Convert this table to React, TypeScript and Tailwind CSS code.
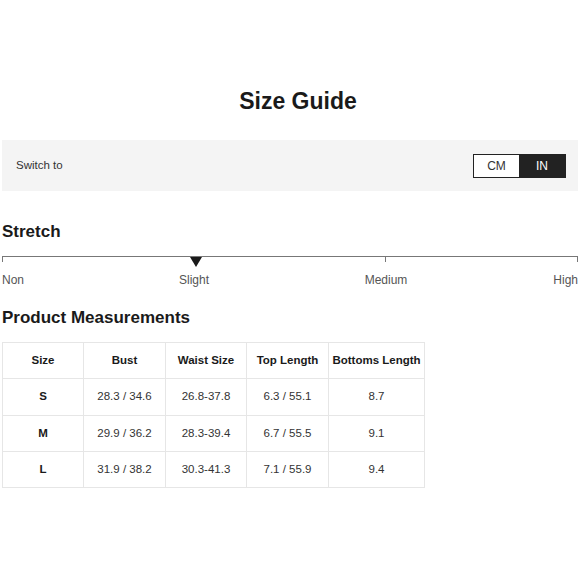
const ROWS = [
  { size: 'S', bust: '28.3 / 34.6', waist: '26.8-37.8', top: '6.3 / 55.1', bottoms: '8.7' },
  { size: 'M', bust: '29.9 / 36.2', waist: '28.3-39.4', top: '6.7 / 55.5', bottoms: '9.1' },
  { size: 'L', bust: '31.9 / 38.2', waist: '30.3-41.3', top: '7.1 / 55.9', bottoms: '9.4' },
]

const HEADERS = [
  { label: 'Size', w: 'w-[81px]' },
  { label: 'Bust', w: 'w-[82px]' },
  { label: 'Waist Size', w: 'w-[81px]' },
  { label: 'Top Length', w: 'w-[82px]' },
  { label: 'Bottoms Length', w: 'w-[96px]' },
]

export default function App() {
  return (
    <div className="w-[580px] h-[580px] bg-white font-['Liberation_Sans',Arial,sans-serif] text-[#222]">
      <div className="h-[140px] pl-[16px] pt-[88px] text-center text-[23px] leading-[26px] font-bold text-[#1a1a1a]">
        Size Guide
      </div>

      <div className="mx-[2px] flex h-[51px] items-center justify-between bg-[#f4f4f4] pl-[14px] pr-[12px]">
        <span className="text-[11.5px] text-[#333]">Switch to</span>
        <div className="flex h-[24px] border border-[#222] text-[12px]">
          <button className="w-[45px] bg-white text-[#333]">CM</button>
          <button className="w-[46px] bg-[#222] text-white">IN</button>
        </div>
      </div>

      <h2 className="mt-[31px] px-[2px] text-[17px] leading-[20px] font-bold text-[#1a1a1a]">Stretch</h2>

      <div className="relative mx-[2px] mt-[14px]">
        <div className="flex h-[6px] border-t border-[#777]">
          <div className="w-[192px] border-l border-[#777]" />
          <div className="w-[192px] border-r border-[#777]" />
          <div className="w-[192px] border-r border-[#777]" />
        </div>
        <svg className="absolute left-[186px] top-[1px]" width="16" height="10" viewBox="0 0 16 10">
          <path d="M2 0 L14 0 L8 10 Z" fill="#1a1a1a" />
        </svg>
        <div className="mt-[11px] grid grid-cols-6 text-[12px] leading-[14px] text-[#555]">
          <span>Non</span>
          <span className="col-span-2 text-center">Slight</span>
          <span className="col-span-2 text-center">Medium</span>
          <span className="text-right">High</span>
        </div>
      </div>

      <h2 className="mt-[21px] px-[2px] text-[17px] leading-[20px] font-bold text-[#1a1a1a]">
        Product Measurements
      </h2>

      <table className="mx-[2px] mt-[14px] border-collapse text-[11.5px] text-[#333]">
        <thead>
          <tr className="h-[36px]">
            {HEADERS.map((h) => (
              <th key={h.label} className={`${h.w} border border-[#e6e6e6] font-bold text-[#1a1a1a]`}>
                {h.label}
              </th>
            ))}
          </tr>
        </thead>
        <tbody>
          {ROWS.map((r, i) => (
            <tr key={r.size} className={i === 0 ? 'h-[37px] text-center' : 'h-[36px] text-center'}>
              <td className="border border-[#e6e6e6] font-bold text-[#1a1a1a]">{r.size}</td>
              <td className="border border-[#e6e6e6]">{r.bust}</td>
              <td className="border border-[#e6e6e6]">{r.waist}</td>
              <td className="border border-[#e6e6e6]">{r.top}</td>
              <td className="border border-[#e6e6e6]">{r.bottoms}</td>
            </tr>
          ))}
        </tbody>
      </table>
    </div>
  )
}
